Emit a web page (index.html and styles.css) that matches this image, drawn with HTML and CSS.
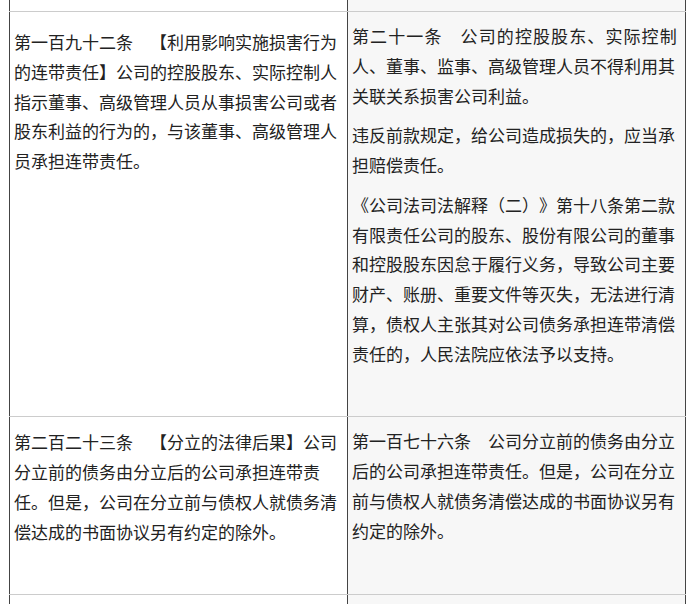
FILE: index.html
```html
<!DOCTYPE html>
<html lang="zh-CN">
<head>
<meta charset="utf-8">
<title>公司法条文对照</title>
<link rel="stylesheet" href="styles.css">
</head>
<body>
<div class="sheet">
  <div class="row row-stub row-stub-top">
    <div class="cell"></div>
    <div class="cell cell-alt"></div>
  </div>
  <div class="row">
    <div class="cell cell-lead">
      <p>第一百九十二条　【利用影响实施损害行为的连带责任】公司的控股股东、实际控制人指示董事、高级管理人员从事损害公司或者股东利益的行为的，与该董事、高级管理人员承担连带责任。</p>
    </div>
    <div class="cell cell-alt">
      <p class="spread-first">第二十一条　公司的控股股东、实际控制人、董事、监事、高级管理人员不得利用其关联关系损害公司利益。</p>
      <p>违反前款规定，给公司造成损失的，应当承担赔偿责任。</p>
      <p>《公司法司法解释（二）》第十八条第二款有限责任公司的股东、股份有限公司的董事和控股股东因怠于履行义务，导致公司主要财产、账册、重要文件等灭失，无法进行清算，债权人主张其对公司债务承担连带清偿责任的，人民法院应依法予以支持。</p>
    </div>
  </div>
  <div class="row">
    <div class="cell cell-second">
      <p>第二百二十三条　【分立的法律后果】公司分立前的债务由分立后的公司承担连带责任。但是，公司在分立前与债权人就债务清偿达成的书面协议另有约定的除外。</p>
    </div>
    <div class="cell cell-alt">
      <p>第一百七十六条　公司分立前的债务由分立后的公司承担连带责任。但是，公司在分立前与债权人就债务清偿达成的书面协议另有约定的除外。</p>
    </div>
  </div>
  <div class="row row-stub row-stub-bottom">
    <div class="cell"></div>
    <div class="cell cell-alt"></div>
  </div>
</div>
</body>
</html>
```

FILE: styles.css
```css
html, body {
  margin: 0;
  padding: 0;
  background: #ffffff;
}

body {
  font-family: "Noto Sans CJK SC", "Noto Sans", sans-serif;
  color: #222222;
  overflow: hidden;
}

.sheet {
  margin-left: 9px;
  width: 677px;
}

.row {
  display: grid;
  grid-template-columns: 338px 339px;
  border-top: 1px solid #cccccc;
}

.cell {
  border-left: 1px solid #444444;
  padding: 9px 4px 48px 4px;
  font-size: 17px;
  line-height: 1.75;
  text-spacing-trim: space-all;
}

.cell-alt {
  background: #f7f7f7;
  border-right: 1px solid #444444;
}

.cell-lead {
  padding-top: 15px;
}

.cell-second {
  padding-top: 10px;
}

.row-stub .cell {
  padding: 0;
}

.row-stub-top {
  border-top: 0;
  height: 11px;
}

.row-stub-bottom {
  height: 20px;
}

.cell p {
  margin: 0 0 10px;
}

.cell p:last-child {
  margin-bottom: 0;
}

.spread-first::first-line {
  letter-spacing: 1.1px;
}
```
